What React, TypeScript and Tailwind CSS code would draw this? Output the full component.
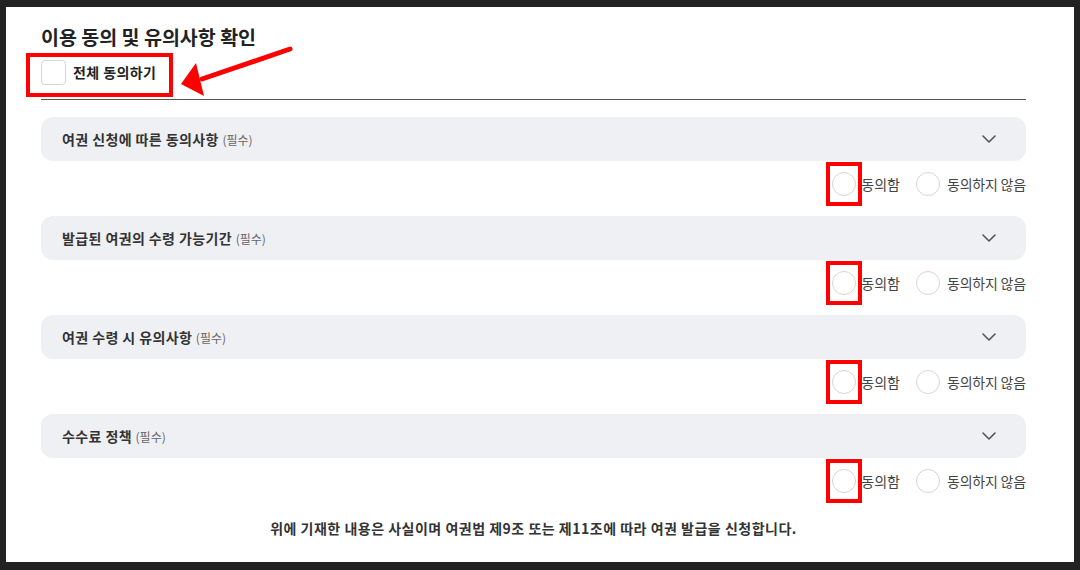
import React from "react";

const items = [
  "여권 신청에 따른 동의사항",
  "발급된 여권의 수령 가능기간",
  "여권 수령 시 유의사항",
  "수수료 정책",
];

const Chevron = () => (
  <svg width="14" height="8" viewBox="0 0 14 8" fill="none">
    <polyline points="1,1 7,7 13,1" stroke="#555" strokeWidth="1.6" strokeLinecap="round" strokeLinejoin="round" />
  </svg>
);

const AgreeItem = ({ title }: { title: string }) => {
  return (
    <div className="flex flex-col">
      <div className="flex items-center justify-between h-[44px] rounded-[12px] bg-[#eff0f3] pl-[21px] pr-[30px]">
        <span className="text-[14px] font-bold tracking-[0.4px] text-[#333]">
          {title} <span className="text-[12px] font-normal tracking-normal text-[#666]">(필수)</span>
        </span>
        <Chevron />
      </div>
      <div className="flex items-center justify-end mt-[11px] h-[24px]">
        <div className="relative flex items-center">
          <span className="w-[24px] h-[24px] rounded-full border border-[#d6d6d6] bg-white" />
          <span className="absolute left-[-6px] top-[-10px] w-[36px] h-[44px] border-4 border-[#ff0000]" />
          <span className="ml-[5px] text-[14px] text-[#444]">동의함</span>
        </div>
        <div className="flex items-center ml-[16px]">
          <span className="w-[24px] h-[24px] rounded-full border border-[#d6d6d6] bg-white" />
          <span className="ml-[7px] text-[14px] tracking-[-0.2px] text-[#444]">동의하지 않음</span>
        </div>
      </div>
    </div>
  );
};

export default function App() {
  return (
    <div
      className="w-[1080px] h-[570px] bg-[#222] pt-[7px] pl-[6px] pr-[6px] pb-[8px]"
      style={{ fontFamily: '"Noto Sans CJK KR", "Noto Sans", sans-serif' }}
    >
      <div className="relative h-full bg-white pt-[16px] pl-[35px] pr-[48px]">
        <h2 className="text-[19.5px] leading-[28px] font-bold text-[#222]">이용 동의 및 유의사항 확인</h2>
        <div className="relative flex items-center h-[25px] mt-[9px]">
          <span className="w-[25px] h-[25px] rounded-[4px] border border-[#d6d6d6] bg-white" />
          <span className="ml-[7px] text-[14px] font-bold tracking-[0.4px] text-[#222]">전체 동의하기</span>
          <span className="absolute left-[-15px] top-[-7px] w-[147px] h-[44px] border-4 border-[#ff0000]" />
        </div>
        <svg className="absolute left-[170px] top-[34px]" width="125" height="60" viewBox="0 0 125 60">
          <line x1="114" y1="8" x2="26" y2="38" stroke="#ff0000" strokeWidth="5" strokeLinecap="round" />
          <polygon points="5,43 20,22 28,55" fill="#ff0000" />
        </svg>
        <div className="h-px bg-[#555] mt-[14px]" />
        <div className="flex flex-col gap-[20px] mt-[17px]">
          {items.map((t) => (
            <AgreeItem key={t} title={t} />
          ))}
        </div>
        <p className="mt-[25px] text-center text-[14px] leading-[20px] font-bold tracking-[0.5px] text-[#333]">
          위에 기재한 내용은 사실이며 여권법 제9조 또는 제11조에 따라 여권 발급을 신청합니다.
        </p>
      </div>
    </div>
  );
}
